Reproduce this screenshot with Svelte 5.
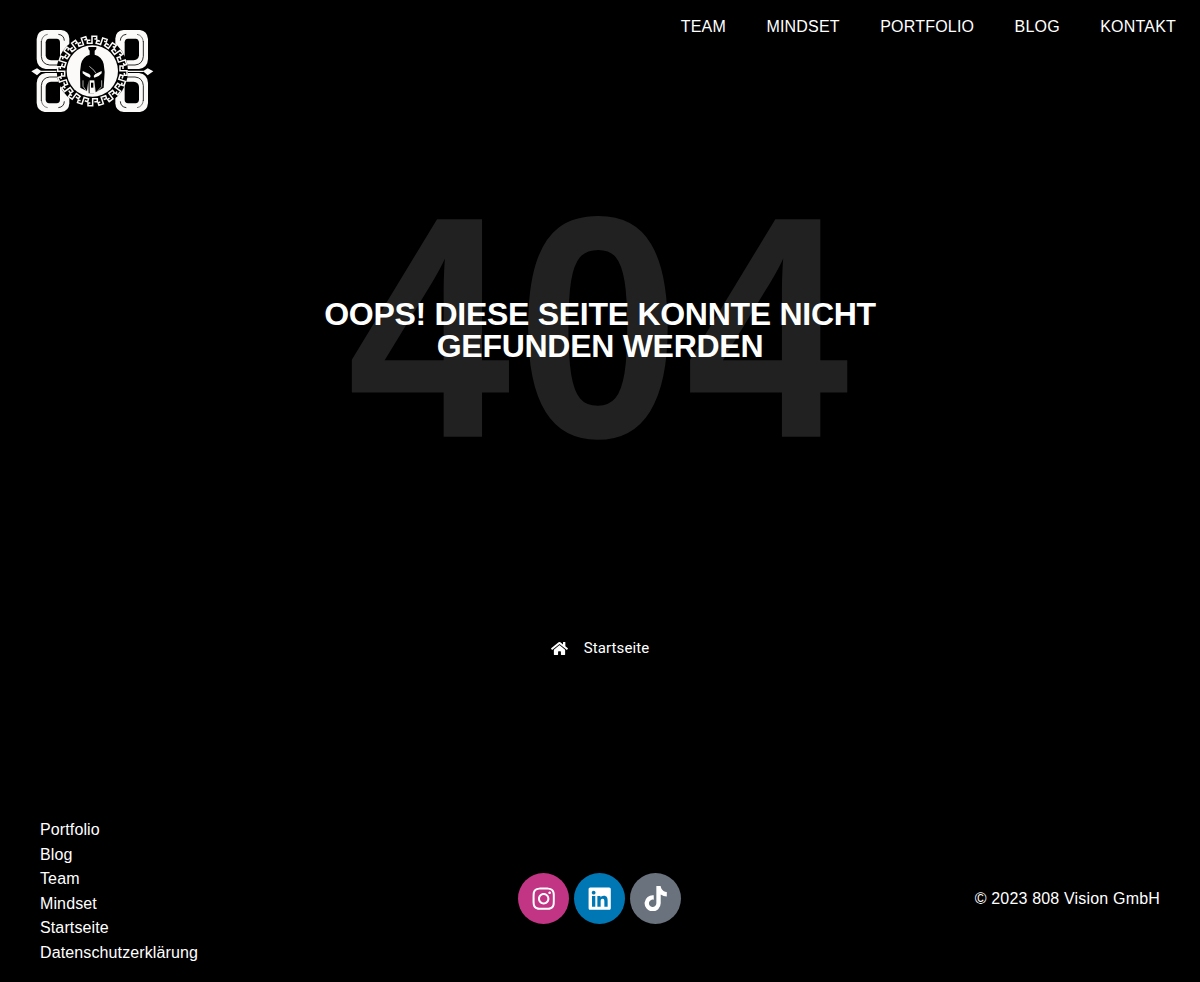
<script>
  const nav = ['Team', 'Mindset', 'Portfolio', 'Blog', 'Kontakt'];
  const links = ['Portfolio', 'Blog', 'Team', 'Mindset', 'Startseite', 'Datenschutzerklärung'];
  const keys = Array.from({ length: 20 }, (_, i) => i * 18);
  const corners = ['', 'translate(404 0) scale(-1 1)', 'translate(0 306) scale(1 -1)', 'translate(404 306) scale(-1 -1)'];
</script>

<div class="page">
  <header>
    <a class="logo" href="#home" aria-label="808 Vision">
      <svg viewBox="0 0 405 300" width="135" height="100">
        {#each corners as c}
          <g transform={c}>
            <path d="M59 30H108Q132 32 133 56V120L108 147H62Q36 143 35 117V57Q37 33 59 30Z" fill="#fbfaf8" />
            <path d="M72 56H95Q105 57 105 67V121H78Q63 119 62 106V67Q63 57 72 56Z" fill="#000" />
            <path d="M100 43Q117 45 118 62M49 63V109Q51 133 74 135H100" fill="none" stroke="#000" stroke-width="2.5" />
            <path d="M49 66Q51 46 68 43" fill="none" stroke="#333" stroke-width="2" />
          </g>
        {/each}
        <path d="M19 154L36 145L50 154L36 166ZM385 154L368 145L354 154L368 166Z" fill="#fbfaf8" />
        <path d="M48 154H95M309 154H356" stroke="#fbfaf8" stroke-width="4" />
        <circle cx="202" cy="153" r="107" fill="#000" />
        <circle cx="202" cy="153" r="77" fill="#fbfaf8" />
        {#each keys as a}
          <path
            transform="rotate({a} 202 153) translate(202 59)"
            d="M-6 2H-15V11H-1V-10H13V-2H6"
            fill="none"
            stroke="#fbfaf8"
            stroke-width="4.6"
          />
        {/each}
        <path d="M190 81H214V87L209 92V104Q231 110 236 132L239 156L236 203L212 217L208 182L207 220H191L190 182L186 214L166 203L165 156L168 132Q173 110 194 104V92L190 87Z" fill="#000" />
        <path d="M173 153L193 162L197 168L195 173L183 168L173 160ZM230 153L211 162L206 168L208 173L221 168L230 160Z" fill="#fbfaf8" />
        <path d="M194 181H208V220H194Z" fill="#fbfaf8" />
        <path d="M198 188H205V203H198Z" fill="#000" />
        <path d="M193 139L207 151L212 159M174 181V199L184 213M230 181V200L217 214" stroke="#fbfaf8" stroke-width="2" fill="none" />
      </svg>
    </a>
    <nav>
      {#each nav as item}<a href="#{item}">{item}</a>{/each}
    </nav>
  </header>

  <main>
    <div class="hero">
      <div class="code">404</div>
      <h1>Oops! Diese Seite konnte nicht<br />gefunden werden</h1>
    </div>
    <a class="home" href="#home">
      <svg viewBox="0 0 576 512" width="17" height="15" fill="#fff"><path d="M280.37 148.26L96 300.11V464a16 16 0 0 0 16 16l112.06-.29a16 16 0 0 0 15.92-16V368a16 16 0 0 1 16-16h64a16 16 0 0 1 16 16v95.64a16 16 0 0 0 16 16.05L464 480a16 16 0 0 0 16-16V300L295.67 148.26a12.19 12.19 0 0 0-15.3 0zM571.6 251.47L488 182.56V44.05a12 12 0 0 0-12-12h-56a12 12 0 0 0-12 12v72.61L318.47 43a48 48 0 0 0-61 0L4.34 251.47a12 12 0 0 0-1.6 16.9l25.5 31A12 12 0 0 0 45.15 301l235.22-193.74a12.19 12.19 0 0 1 15.3 0L530.9 301a12 12 0 0 0 16.9-1.6l25.5-31a12 12 0 0 0-1.7-16.93z" /></svg>
      <span>Startseite</span>
    </a>
  </main>

  <footer>
    <ul>
      {#each links as item}<li><a href="#{item}">{item}</a></li>{/each}
    </ul>
    <div class="social">
      <a class="instagram" href="#instagram" aria-label="Instagram">
        <svg viewBox="0 0 448 512" width="25.4" height="25.4"><path d="M224.1 141c-63.6 0-114.9 51.3-114.9 114.9s51.3 114.9 114.9 114.9S339 319.5 339 255.9 287.7 141 224.1 141zm0 189.6c-41.1 0-74.7-33.5-74.7-74.7s33.5-74.7 74.7-74.7 74.7 33.5 74.7 74.7-33.6 74.7-74.7 74.7zm146.4-194.3c0 14.9-12 26.8-26.8 26.8-14.9 0-26.8-12-26.8-26.8s12-26.8 26.8-26.8 26.8 12 26.8 26.8zm76.1 27.2c-1.7-35.9-9.9-67.7-36.2-93.9-26.2-26.2-58-34.4-93.9-36.2-37-2.1-147.9-2.1-184.9 0-35.8 1.7-67.6 9.9-93.9 36.1s-34.4 58-36.2 93.9c-2.1 37-2.1 147.9 0 184.9 1.7 35.9 9.9 67.7 36.2 93.9s58 34.4 93.9 36.2c37 2.1 147.9 2.1 184.9 0 35.9-1.7 67.7-9.9 93.9-36.2 26.2-26.2 34.4-58 36.2-93.9 2.1-37 2.1-147.8 0-184.8zM398.8 388c-7.8 19.6-22.9 34.7-42.6 42.6-29.5 11.7-99.5 9-132.1 9s-102.7 2.6-132.1-9c-19.6-7.8-34.7-22.9-42.6-42.6-11.7-29.5-9-99.5-9-132.1s-2.6-102.7 9-132.1c7.8-19.6 22.9-34.7 42.6-42.6 29.5-11.7 99.5-9 132.1-9s102.7-2.6 132.1 9c19.6 7.8 34.7 22.9 42.6 42.6 11.7 29.5 9 99.5 9 132.1s2.7 102.7-9 132.1z" /></svg>
      </a>
      <a class="linkedin" href="#linkedin" aria-label="LinkedIn">
        <svg viewBox="0 0 448 512" width="25.4" height="25.4"><path d="M416 32H31.9C14.3 32 0 46.5 0 64.3v383.4C0 465.5 14.3 480 31.9 480H416c17.6 0 32-14.5 32-32.3V64.3c0-17.8-14.4-32.3-32-32.3zM135.4 416H69V202.2h66.5V416zm-33.2-243c-21.3 0-38.5-17.3-38.5-38.5S80.9 96 102.2 96c21.2 0 38.5 17.3 38.5 38.5 0 21.3-17.2 38.5-38.5 38.5zm282.1 243h-66.4V312c0-24.8-.5-56.7-34.5-56.7-34.6 0-39.9 27-39.9 54.9V416h-66.4V202.2h63.7v29.2h.9c8.9-16.8 30.6-34.5 62.9-34.5 67.2 0 79.7 44.3 79.7 101.9V416z" /></svg>
      </a>
      <a class="tiktok" href="#tiktok" aria-label="TikTok">
        <svg viewBox="0 0 448 512" width="25.4" height="25.4"><path d="M448 209.91a210.06 210.06 0 0 1-122.77-39.25v178.72A162.55 162.55 0 1 1 185 188.31v89.89a74.62 74.62 0 1 0 52.23 71.18V0h88a121.18 121.18 0 0 0 1.86 22.17 122.18 122.18 0 0 0 53.91 80.22 121.43 121.43 0 0 0 67 20.14z" /></svg>
      </a>
    </div>
    <p>© 2023 808 Vision GmbH</p>
  </footer>
</div>

<style>
  :global(body) { margin: 0; background: #000; }
  .page {
    height: 982px;
    display: flex;
    flex-direction: column;
    overflow: hidden;
    background: #000;
    color: #fff;
    font-family: Arial, 'Liberation Sans', sans-serif;
    font-size: 16px;
  }
  a { color: inherit; text-decoration: none; }
  svg { display: block; }
  header {
    height: 140px;
    display: flex;
    justify-content: space-between;
    align-items: flex-start;
    box-sizing: border-box;
    padding: 0 24px 0 25px;
  }
  .logo { margin-top: 20px; }
  nav {
    display: flex;
    gap: 40.4px;
    margin-top: 17px;
    line-height: 20px;
    letter-spacing: 0.2px;
    text-transform: uppercase;
  }
  main { flex: 1; display: flex; flex-direction: column; align-items: center; }
  .hero { display: grid; place-items: center; width: 100%; height: 380px; }
  .code, h1 { grid-area: 1 / 1; }
  .code {
    color: #212121;
    font-size: 304px;
    font-weight: 700;
    line-height: 1;
    letter-spacing: 6.2px;
    transform: translate(1.2px, -2.5px) scale(0.965, 1.04);
  }
  h1 {
    position: relative;
    margin: 0;
    font-size: 32px;
    line-height: 32px;
    letter-spacing: -0.28px;
    text-align: center;
    text-transform: uppercase;
  }
  .home {
    display: flex;
    align-items: center;
    gap: 16px;
    margin-top: 119px;
    font: 400 15px/18px Roboto, sans-serif;
    letter-spacing: 0.1px;
  }
  footer {
    height: 164px;
    display: grid;
    grid-template-columns: 1fr auto 1fr;
    align-items: center;
    padding: 0 40px 17px;
    box-sizing: border-box;
  }
  ul { list-style: none; margin: 0; padding: 0; line-height: 24.5px; letter-spacing: 0.12px; }
  .social { display: flex; gap: 5px; margin: 14px 2px 0 0; }
  .social a {
    display: grid;
    place-items: center;
    box-sizing: border-box;
    width: 51px;
    height: 51px;
    padding-left: 1px;
    border-radius: 50%;
  }
  .social svg { fill: #fff; }
  .instagram { background: #c13584; }
  .linkedin { background: #0077b5; }
  .tiktok { background: #69727d; }
  footer p { margin: 14px 0 0; text-align: right; letter-spacing: 0.18px; }
</style>
